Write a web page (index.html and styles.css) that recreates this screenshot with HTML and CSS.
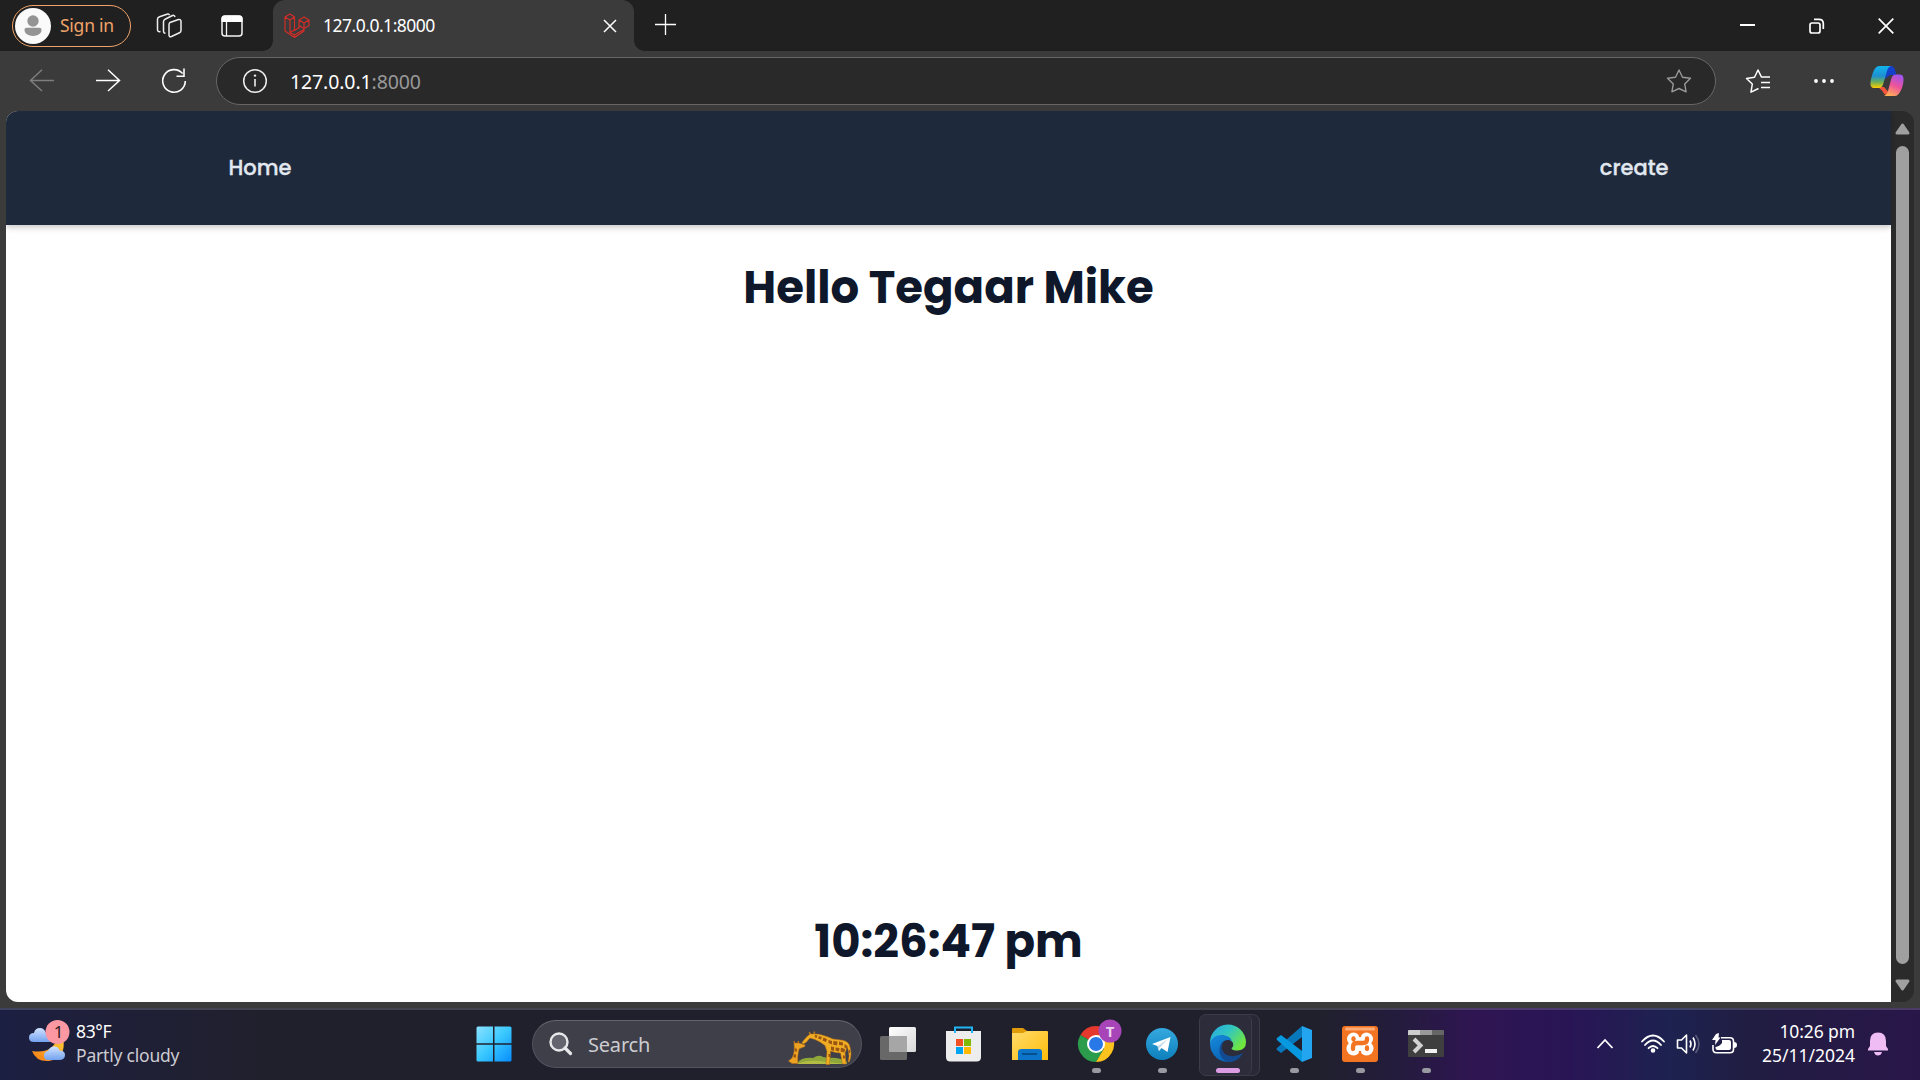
FILE: index.html
```html
<!DOCTYPE html>
<html lang="en">
<head>
<meta charset="utf-8">
<title>127.0.0.1:8000</title>
<link rel="stylesheet" href="styles.css">
</head>
<body>
<div class="screen">
  <div class="tabstrip">
    <div class="profile">
      <svg class="avatar" width="36" height="36" viewBox="0 0 36 36"><circle cx="18" cy="18" r="18" fill="#fafafa"/><circle cx="18" cy="13" r="5.700" fill="#949494"/><path d="M11.500 19.800h13q2 0 2 2c0 4-4 6.200-8.500 6.200s-8.500-2.200-8.500-6.200q0-2 2-2z" fill="#949494"/></svg>
      <span class="signin">Sign in</span>
    </div>
    <svg class="workspaces" width="26" height="26" viewBox="0 0 26 26" fill="none" stroke="#eee" stroke-width="1.500" stroke-linejoin="round"><path d="M14 9.500l8.500-3q2-.5 2.500 1.500v9.500q0 1.500-1.500 2.200l-8 3.800q-2.500.8-2.500-1.500v-10q0-2 1-2.500z"/><path d="M9.500 20q-2 .5-2-2V8.500q0-1.500 2-2.500l7-3.500q2-.7 2.500 1.500M4.500 18.500q-3 .7-3-2V6q0-1.500 2-2.300L11 1.200q2-.7 2.500 1"/></svg>
    <svg class="vtabs" width="22" height="22" viewBox="0 0 22 22"><rect x="1" y="1" width="20" height="20" rx="3" fill="none" stroke="#f4f4f4" stroke-width="1.500"/><path d="M.5 6V4Q.5.500 4 .5h14q3.500 0 3.500 3.500v3H.5z" fill="#fff"/><path d="M5.500 7v14" stroke="#f4f4f4" stroke-width="1.300"/></svg>
    <div class="tab">
      <svg width="26" height="26" viewBox="0 0 26 26" fill="none" stroke="#d52d28" stroke-width="1.150" stroke-linejoin="round"><path d="M1 4l5-3 4.500 3v13.500l4.500-2.800V7l5-3 5 3v5.500l-5 3V18L10.500 24.500 1 18zM1 4l5 3 4.500-3M6 7v12.500l4.500 2.500 9.500-5.500M6 19.500l4.500-2.500M10.500 21.500v3M15 7l5 3 5-3M20 10v5.500M15 12.500l5 3"/></svg>
      <span class="tab-title">127.0.0.1:8000</span>
      <svg class="tab-close" width="14" height="14" viewBox="0 0 14 14"><path d="M1 1l12 12M13 1L1 13" stroke="#fff" stroke-width="1.500"/></svg>
    </div>
    <svg class="newtab" width="22" height="22" viewBox="0 0 22 22"><path d="M10.500 0v21M0 10.500h21" stroke="#fff" stroke-width="1.300"/></svg>
    <div class="window-buttons">
      <svg width="16" height="16" viewBox="0 0 16 16"><path d="M0 7h15" stroke="#fff" stroke-width="2"/></svg>
      <svg width="16" height="16" viewBox="0 0 16 16" fill="none" stroke="#fff" stroke-width="1.700"><rect x="1" y="5" width="10" height="10" rx="2"/><path d="M5 1.300h5q4.300 0 4.300 4.300V11"/></svg>
      <svg width="16" height="16" viewBox="0 0 16 16"><path d="M.7.700l14.600 14.600M15.300.700L.7 15.300" stroke="#fff" stroke-width="1.700"/></svg>
    </div>
  </div>

  <div class="toolbar">
    <div class="nav">
      <svg width="26" height="26" viewBox="0 0 26 26" fill="none" stroke="#7e7e7e" stroke-width="1.500"><path d="M25 12.500H1.500M13 1.800L1.500 12.500 13 23"/></svg>
      <svg width="26" height="26" viewBox="0 0 26 26" fill="none" stroke="#fff" stroke-width="1.500"><path d="M1 12.500h23.500M13 1.800l11.500 10.700L13 23"/></svg>
      <svg width="26" height="26" viewBox="0 0 26 26" fill="none" stroke="#fff" stroke-width="1.600"><path d="M24.300 13A11.300 11.300 0 1 1 21.600 5.600M23 .5v7.700h-7.500"/></svg>
    </div>
    <div class="address">
      <svg width="26" height="26" viewBox="0 0 26 26"><circle cx="13" cy="13" r="11.300" fill="none" stroke="#eee" stroke-width="1.500"/><path d="M13 11v7.500" stroke="#eee" stroke-width="1.600"/><circle cx="13" cy="7.600" r="1.200" fill="#eee"/></svg>
      <span class="url">127.0.0.1<span class="port">:8000</span></span>
      <svg class="star" width="26" height="26" viewBox="0 0 26 26" fill="none" stroke="#999" stroke-width="1.400" stroke-linejoin="round"><path d="M13 2l3.500 7.200 8 1.100-5.800 5.600 1.400 7.900L13 20.500l-7.100 3.300 1.400-7.900L1.500 10.300l8-1.100z"/></svg>
    </div>
    <svg class="favs" width="26" height="26" viewBox="0 0 26 26" fill="none" stroke="#fff" stroke-width="1.500" stroke-linejoin="round"><path d="M13.500 20.500L6 24.200l1.300-8.200L1.500 10.500l8-1.200L13 2l3.500 7.200M16 9h9M16 14.500h9M16 19.500h9"/></svg>
    <svg class="more" width="22" height="6" viewBox="0 0 22 6" fill="#fff"><circle cx="3" cy="3" r="1.900"/><circle cx="11" cy="3" r="1.900"/><circle cx="19" cy="3" r="1.900"/></svg>
    <svg class="copilot" width="34" height="32" viewBox="0 0 34 32">
      <defs><linearGradient id="ca" x1="0" y1="0" x2="0" y2="1"><stop offset="0" stop-color="#12b5ed"/><stop offset=".45" stop-color="#1e8fd2"/><stop offset=".72" stop-color="#69ae5d"/><stop offset="1" stop-color="#ffcf00"/></linearGradient><linearGradient id="cb" x1=".7" y1="0" x2=".3" y2="1"><stop offset="0" stop-color="#a054ed"/><stop offset=".5" stop-color="#ee539b"/><stop offset="1" stop-color="#ffb055"/></linearGradient></defs>
      <path d="M16 1h5q3 0 4 4l1.500 5H20l-7 5z" fill="#1540cb"/><path d="M8 22h6l7 8h-4q-3 0-4.500-4z" fill="#f2573b"/>
      <path d="M9 1h12q-3 1-4 5l-3.500 12q-1 5-5 5H4q-4 0-3.500-6Q2 8 5 3.500 6.500 1 9 1z" fill="url(#ca)"/><path d="M25 31H14q3-1 4-5l3.500-13q1-3.500 4.500-3.500h4q4 0 3.500 6Q33 23 29 28.500 27 31 25 31z" fill="url(#cb)"/>
    </svg>
  </div>

  <div class="viewport">
    <div class="page">
      <nav class="site-nav"><span class="home">Home</span><span class="create">create</span></nav>
      <main class="content"><h1 class="greeting">Hello Tegaar Mike</h1><h1 class="clock">10:26:47 pm</h1></main>
    </div>
    <div class="scrollbar">
      <svg width="15" height="12" viewBox="0 0 15 12"><path d="M7.500 2L13 10H2z" fill="#a0a0a0" stroke="#a0a0a0" stroke-width="3" stroke-linejoin="round"/></svg>
      <div class="thumb"></div>
      <svg width="15" height="12" viewBox="0 0 15 12"><path d="M7.500 10L13 2H2z" fill="#a0a0a0" stroke="#a0a0a0" stroke-width="3" stroke-linejoin="round"/></svg>
    </div>
  </div>

  <footer class="taskbar">
    <div class="weather">
      <svg class="weather-icon" width="42" height="42" viewBox="0 0 42 42">
        <defs><linearGradient id="cl" x1="0" y1="0" x2="0" y2="1"><stop offset="0" stop-color="#d1e3ff"/><stop offset="1" stop-color="#73a2ef"/></linearGradient><linearGradient id="mo" x1="1" y1="0" x2="0" y2="1"><stop offset="0" stop-color="#ffcf38"/><stop offset="1" stop-color="#f27a16"/></linearGradient></defs>
        <path d="M34 18q4 20-14 23-13 1-17-10 20 3 25-12z" fill="url(#mo)"/><path d="M5 22q-5 0-5-4.500Q0 13 5 13q1-5 6-5 4 0 6 5l5 1v8z" fill="url(#cl)"/><path d="M19 40q-4 0-4-4.500 0-4 4-4.500 2-5 6.500-4.500 4 0 5 4 5.500 0 5.500 4.500t-5 5z" fill="url(#cl)"/>
        <circle cx="28.500" cy="12" r="12" fill="#fc98a2"/><text x="29.500" y="17.500" text-anchor="middle" class="badge-number">1</text>
      </svg>
      <div class="weather-text"><span class="temp">83°F</span><span class="sky">Partly cloudy</span></div>
    </div>
    <div class="apps">
      <svg class="start" width="36" height="36" viewBox="0 0 36 36"><defs><linearGradient id="wi" x1="0" y1="0" x2="1" y2="1"><stop offset="0" stop-color="#8be2ff"/><stop offset=".5" stop-color="#39c7ff"/><stop offset="1" stop-color="#078dff"/></linearGradient></defs><path d="M2 .5h15v16.800H.5V2Q.5.500 2 .5zM18.500.500H34q1.500 0 1.500 1.500v15.300h-17zM.5 18.700H17v16.800H2Q.5 35.500.5 34zM18.500 18.700h17V34q0 1.500-1.500 1.500H18.500z" fill="url(#wi)"/></svg>
      <div class="search">
        <svg width="24" height="24" viewBox="0 0 24 24" fill="none" stroke="#e8e8ea"><circle cx="10" cy="10" r="8.500" stroke-width="2.400" fill="#64646e"/><path d="M16 16l5.500 5.500" stroke-width="3.200" stroke-linecap="round"/></svg>
        <span class="search-label">Search</span>
        <svg class="giraffes" width="64" height="34" viewBox="0 0 64 34">
          <path d="M9 33l2-3q5-4 14-3 6-4 10-1l6 1q10-1 18 4v2z" fill="#8fa63a"/><path d="M9 33q10-4 22-3l26 3z" fill="#b3bd43"/>
          <path d="M22.500 3L21 1.200M26 3l.5-2.500" stroke="#c47814" stroke-width="1.400"/>
          <path d="M22 3h6q3 0 6 1 7 2 11 4l8 1q8 1 9 7l1 6q0 6-2 9h-1q2-6 0-13l-2-3q1 4-1 7l1 11h-3.500l-2-11q-5 0-10-2l-1 13.500h-3.500l1-13-2-6q-5-4-10-6-3-1-5-1.500l-4 4.500-3 1.500-1-1.500 4-5z" fill="#f0ad24" stroke="#b96f14" stroke-width=".5"/>
          <path d="M6.500 12.500L6 10M10 12.500l.5-2.500" stroke="#c47814" stroke-width="1.200"/>
          <path d="M6 12h5l6 2v1.500L13 17l-2 1q-2 8-1 14.500H4L.5 30 4 27q3-5 2-15z" fill="#eda321" stroke="#b96f14" stroke-width=".5"/>
          <path d="M27 4l2.500.5-1 2.500-2-1zM31 5l3 1-1 2.500-3-1zM35.500 6.500l3.500 1.500-1 3-3.500-1.500zM40.500 9l3.500 1v3.500l-3.500-1.500zM45.500 10l4 .5-.5 4-4-1zM51 10.500l4 1v3l-4-.5zM56.500 13l3 2v2.500l-3-1zM43 15.500l3 .5v4l-3-1zM47.500 16.500l4 .5-.5 3.500-3.500-1zM53 16.500l4 1.500-.5 3.500-4-1zM40.500 23h2v3h-2zM55 24l2 1v2.500h-2zM61 19h1v3h-1zM7 17l2 1-.5 3-2-1zM6 23l2 .5v3H5.500z" fill="#995514"/>
        </svg>
      </div>
      <div class="app"><svg width="36" height="36" viewBox="0 0 36 36"><defs><linearGradient id="tv" x1="0" y1="0" x2="1" y2="1"><stop offset="0" stop-color="#fff"/><stop offset="1" stop-color="#d8d8d8"/></linearGradient></defs><rect x="9" y="1" width="27" height="25" rx="1.500" fill="url(#tv)"/><rect y="10" width="27" height="24" rx="1.500" fill="#686868"/><path d="M9 10h18v16H10q-1 0-1-1z" fill="#a6a6a6"/></svg></div>
      <div class="app"><svg width="36" height="36" viewBox="0 0 36 36"><path d="M0 5h35v26q0 4.500-4.500 4.500h-26Q0 35.500 0 31z" fill="#ededed"/><path d="M9 7V1.500h17V7" fill="none" stroke="#21b5f5" stroke-width="2"/><path d="M10 13h7v7h-7z" fill="#f25022"/><path d="M18 13h7v7h-7z" fill="#7fba00"/><path d="M10 21h7v7h-7z" fill="#00a4ef"/><path d="M18 21h7v7h-7z" fill="#ffb900"/></svg></div>
      <div class="app"><svg width="36" height="36" viewBox="0 0 36 36"><defs><linearGradient id="fo" x1="0" y1="0" x2="1" y2="1"><stop offset="0" stop-color="#ffdc6b"/><stop offset="1" stop-color="#ffbd0a"/></linearGradient></defs><path d="M0 3q0-1 1-1h10l4 3v6H0z" fill="#df9b08"/><path d="M0 7h11l4-2h20q1 0 1 1v28H0z" fill="url(#fo)"/><path d="M6 34V26q0-3 3.500-3h17q3.500 0 3.500 3v8z" fill="#0c75ca"/><path d="M10 28h15" stroke="#064681" stroke-width="1.600"/></svg></div>
      <div class="app running"><svg width="44" height="44" viewBox="0 0 44 44" class="chrome"><path d="M22 24L6.400 15A18 18 0 0 1 37.600 15H22z" fill="#e5392e"/><path d="M22 24L6.400 15A18 18 0 0 0 22 42l8-13.500z" fill="#2a9c4b"/><path d="M22 15h15.600A18 18 0 0 1 22 42l8-13.500z" fill="#fcc31e"/><circle cx="22" cy="24" r="9" fill="#fff"/><circle cx="22" cy="24" r="7" fill="#2878e8"/><circle cx="36" cy="11" r="11.500" fill="#a644b8"/><text x="36" y="16.500" text-anchor="middle" class="chrome-user">T</text></svg></div>
      <div class="app running"><svg width="36" height="36" viewBox="0 0 36 36"><defs><linearGradient id="te" x1="0" y1="0" x2="0" y2="1"><stop offset="0" stop-color="#35a9df"/><stop offset="1" stop-color="#0d80bd"/></linearGradient></defs><circle cx="18" cy="18" r="16" fill="url(#te)"/><path d="M8 18l18.500-7-3 15-6-4-2.500 3-1.500-5z" fill="#fff"/><path d="M13.500 20L24 13l-8.500 9-.5 3z" fill="#c6dce9"/></svg></div>
      <div class="app edge running"><svg width="36" height="36" viewBox="0 0 36 36"><defs><linearGradient id="eg" x1="0" y1="0" x2="1" y2=".6"><stop offset="0" stop-color="#25a5e7"/><stop offset=".5" stop-color="#32c6c0"/><stop offset="1" stop-color="#70e73e"/></linearGradient><linearGradient id="eb" x1="0" y1="0" x2=".4" y2="1"><stop offset="0" stop-color="#168bdc"/><stop offset="1" stop-color="#0b65b9"/></linearGradient></defs><path d="M0 17A18 18 0 0 1 36 16q0 8-8 8.500-6 0-6.500-2 3-3 1-6.500L13 9z" fill="url(#eg)"/><path d="M0 17q3-8 11-8 9 0 11 6-4-2-8 0-5 4-3 10 3 8 11 10.500Q7 38 1 24 0 20 0 17z" fill="url(#eb)"/><path d="M14 15q-5 7 1 13 8 5 18-1-5 9-14 9-8-2-9.500-10Q9 18 14 15z" fill="#124b91"/></svg></div>
      <div class="app running"><svg width="36" height="36" viewBox="0 0 36 36"><path d="M26 0v11L5 27l-4-3q-1-1 0-2z" fill="#0878bd"/><path d="M26 36V25L5 9l-4 3q-1 1 0 2z" fill="#0799df"/><path d="M26 0l10 4v28l-10 4z" fill="#24a5f0"/></svg></div>
      <div class="app running"><svg width="36" height="36" viewBox="0 0 36 36"><rect width="36" height="36" rx="3" fill="#f37521"/><rect x="3" y="1.500" width="30" height="3" rx="1.500" fill="#ffad78"/><g fill="#fff"><circle cx="11.500" cy="13" r="6.500"/><circle cx="24.500" cy="13" r="6.500"/><circle cx="11.500" cy="22.500" r="7"/><circle cx="24.500" cy="22.500" r="7"/><path d="M11 10h14v16H11z"/></g><g fill="none" stroke="#f37521" stroke-linecap="round" stroke-linejoin="round"><path d="M11.500 12.500v1M25 12.500v1q0 3.500-4 3.500h-6q-4 0-4 4v2M25 21.500v1.500" stroke-width="4.300"/><path d="M18 5.500v4.500M18 26v4" stroke-width="2.500"/></g></svg></div>
      <div class="app running"><svg width="36" height="36" viewBox="0 0 36 36"><path d="M0 5q0-1 1-1h34q1 0 1 1v25q0 1-1 1H1q-1 0-1-1z" fill="#3f3f40"/><path d="M0 9V5q0-1 1-1h11v5z" fill="#ccc"/><path d="M12 4h12v5H12z" fill="#999"/><path d="M24 4h11q1 0 1 1v4H24z" fill="#666"/><path d="M6 13l6.500 6.500L6 26" fill="none" stroke="#d1d1d1" stroke-width="4"/><path d="M17 23h12v4H17z" fill="#f1f1f1"/></svg></div>
    </div>
    <div class="tray">
      <svg class="chevron" width="18" height="12" viewBox="0 0 18 12"><path d="M1.500 10L9 2l7.500 8" fill="none" stroke="#fff" stroke-width="1.800"/></svg>
      <svg class="wifi" width="26" height="20" viewBox="0 0 26 20" fill="none" stroke="#fff" stroke-width="1.800" stroke-linecap="round"><path d="M2 7.500q11-12 22 0M5 11q8-9 16 0M8.500 14.200q4.500-4.500 9 0"/><circle cx="13" cy="16.500" r="1.400" fill="#fff"/></svg>
      <svg class="sound" width="26" height="22" viewBox="0 0 26 22" fill="none" stroke="#fff" stroke-width="1.600" stroke-linejoin="round"><path d="M1.500 7h4l5-5v18l-5-5h-4zM14 7.500q2 3.500 0 7M17 4.500q4 6.500 0 13"/><path d="M19.500 2q7 9 0 18" stroke="#5b5b7b"/></svg>
      <svg class="battery" width="26" height="22" viewBox="0 0 26 22"><path d="M9 4.700h9q3.500 0 3.500 3.500v8q0 3.500-3.500 3.500H4.500Q1 19.700 1 16.200V12" fill="none" stroke="#fff" stroke-width="1.600"/><path d="M10 7h7q2 0 2 2v6q0 2-2 2H5.500q-2 0-2-2v-1q4-.5 6.500-4z" fill="#fff"/><path d="M22 9q3 0 3 3t-3 3zM4 1l3-1-.5 4.500h2L3 12l.5-5H0z" fill="#fff"/></svg>
      <div class="datetime"><span class="time">10:26 pm</span><span class="date">25/11/2024</span></div>
      <svg class="bell" width="20" height="24" viewBox="0 0 20 24"><path d="M2 9q0-8.500 8-8.500T18 9v5l2 3v1.500H0V17l2-3zM6 20h8q-1 3.500-4 3.500T6 20z" fill="#efbdf4"/></svg>
    </div>
  </footer>
</div>
</body>
</html>
```
FILE: styles.css
```css
* { box-sizing: border-box; }
body { margin: 0; font-family: "Noto Sans", sans-serif; }
svg { display: block; flex: none; overflow: visible; }
span { white-space: nowrap; }
.screen { width: 1920px; height: 1080px; overflow: hidden; display: flex; flex-direction: column; background: #3b3b3b; }

.tabstrip { height: 51px; flex: none; display: flex; align-items: center; background: #202020; color: #fff; }
.profile { width: 119px; height: 42px; margin-left: 12px; border: 1.500px solid #efa36a; border-radius: 21px; display: flex; align-items: center; padding-left: 2px; gap: 9px; }
.signin { color: #efa36a; font-size: 17.500px; letter-spacing: -.25px; padding-bottom: 1px; }
.workspaces { margin-left: 25px; }
.vtabs { margin-left: 39px; }
.tab { position: relative; width: 361px; height: 51px; margin-left: 30px; border-radius: 12px 12px 0 0; background: #3b3b3b; display: flex; align-items: center; padding-left: 11px; }
.tab::before, .tab::after { content: ""; position: absolute; bottom: 0; width: 10px; height: 10px; }
.tab::before { left: -10px; background: radial-gradient(circle at 0 0, #202020 9.500px, #3b3b3b 10px); }
.tab::after { right: -10px; background: radial-gradient(circle at 100% 0, #202020 9.500px, #3b3b3b 10px); }
.tab-title { margin-left: 13px; font-size: 17.500px; letter-spacing: -.5px; padding-bottom: 1px; }
.tab-close { margin-left: auto; margin-right: 17px; }
.newtab { margin-left: 21px; margin-top: -1px; }
.window-buttons { display: flex; gap: 53px; margin-left: auto; margin-right: 26px; }

.toolbar { height: 60px; flex: none; display: flex; align-items: center; }
.nav { display: flex; gap: 40px; margin-left: 29px; }
.address { width: 1500px; height: 48px; margin-left: 29px; border: 1.500px solid #666; border-radius: 24px; background: #292929; display: flex; align-items: center; padding: 0 23px 0 25px; }
.url { margin-left: 22px; font-size: 19.500px; letter-spacing: -.12px; color: #fff; }
.port { color: #999; }
.star { margin-left: auto; }
.favs { margin-left: 29px; }
.more { margin-left: 42px; }
.copilot { margin-left: 35px; }

.viewport { flex: none; width: 1908px; height: 891px; margin-left: 6px; border-radius: 12px; overflow: hidden; display: flex; background: #2b2b2b; }
.page { width: 1885px; display: flex; flex-direction: column; background: #fff; font-family: Poppins, Inter, sans-serif; font-feature-settings: "cv11"; }
.site-nav { height: 114px; flex: none; display: flex; align-items: center; justify-content: space-between; padding: 0 222.500px 2px 222.500px; background: #1e293b; color: #e2e8f0; font-size: 21px; font-weight: 500; -webkit-text-stroke: .3px #e2e8f0; box-shadow: 0 4px 6px rgba(0,0,0,.1), 0 2px 4px rgba(0,0,0,.1); }
.content { flex: 1; display: flex; flex-direction: column; align-items: center; justify-content: space-between; padding: 28px 0 25px; color: #0f172a; }
.greeting, .clock { margin: 0; font-size: 45px; line-height: 70px; font-weight: 700; white-space: nowrap; }
.scrollbar { width: 23px; display: flex; flex-direction: column; align-items: center; padding: 12px 0 11px; }
.thumb { width: 13px; flex: 1; margin: 11px 0 15px; border-radius: 7px; background: #a0a0a0; }

.taskbar { height: 72px; flex: none; margin-top: 6px; padding-bottom: 2px; border-top: 2px solid rgba(255,255,255,.16); display: flex; align-items: center; color: #fff; background: linear-gradient(90deg, #1b1f42 0, #1e1f3a 80px, #20202d 260px, #20202d 1320px, #241b3d 1400px, #2f1552 1475px, #291555 1570px, #1d2250 1670px, #211d42 1750px, #291649 1920px); }
.weather { flex: none; display: flex; align-items: center; gap: 5px; margin-left: 29px; width: 447px; }
.weather-icon { margin-bottom: 7px; }
.badge-number { font-size: 17px; fill: #302024; }
.weather-text { display: flex; flex-direction: column; font-size: 17.500px; line-height: 24px; letter-spacing: -.35px; padding-bottom: 3px; }
.sky { color: #cbcbd1; letter-spacing: -.2px; }
.apps { flex: none; display: flex; align-items: center; }
.search { flex: none; width: 330px; height: 48px; margin: 0 7px 0 20px; border-radius: 24px; border: 1.500px solid #53535d; border-top-color: #65656e; background: #3f3f4a; display: flex; align-items: center; padding: 0 9px 0 16px; }
.search-label { margin-left: 15px; font-size: 20px; color: #ccccd0; letter-spacing: -.2px; }
.giraffes { margin-left: auto; margin-top: 7px; }
.app { position: relative; width: 58px; height: 60px; margin-right: 8px; flex: none; display: flex; align-items: center; justify-content: center; }
.chrome { margin-top: -4px; }
.running::after { content: ""; position: absolute; bottom: 1px; width: 9px; height: 5px; border-radius: 3px; background: #9999a1; }
.chrome-user { font-size: 15px; font-weight: 700; fill: #ead2ee; }
.edge::before { content: ""; position: absolute; left: 0; top: 0; width: 59px; height: 60px; border: 1px solid #3c3b49; border-radius: 7px; background: #2d2c3b; box-shadow: inset -7px 0 #292837, inset -8px 0 #3c3b49; }
.edge svg { position: relative; }
.edge::after { width: 24px; background: #dc9ce4; }
.tray { flex: none; display: flex; align-items: center; margin-left: auto; }
.wifi { margin-left: 26px; }
.sound { margin-left: 10px; }
.battery { margin-left: 10px; }
.datetime { width: 95px; margin-left: 22px; display: flex; flex-direction: column; align-items: flex-end; font-size: 17.500px; line-height: 24px; letter-spacing: -.1px; padding-bottom: 2px; }
.date { letter-spacing: 0; }
.bell { margin: 0 32px 0 13px; }
```
